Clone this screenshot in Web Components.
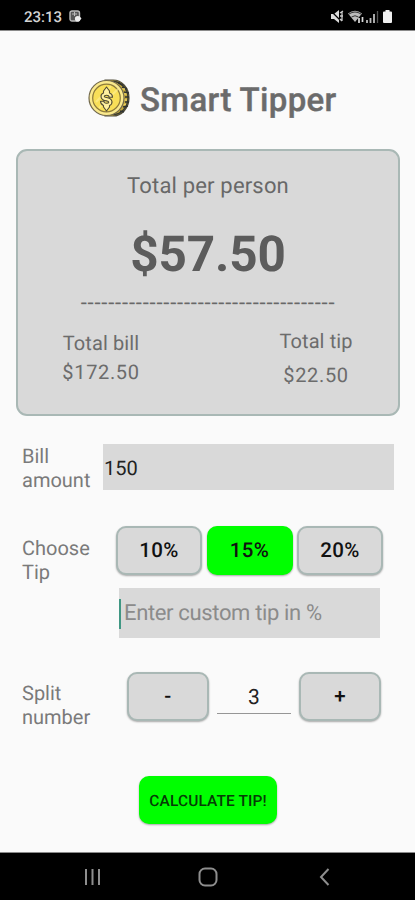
<!DOCTYPE html>
<html lang="en">
<head>
<meta charset="utf-8">
<title>Smart Tipper</title>
<style>
html,body{margin:0;height:100%}
body{font-family:Roboto,"Liberation Sans",sans-serif;background:#fafafa;overflow:hidden;text-rendering:geometricPrecision}
</style>
</head>
<body>
<tipper-app></tipper-app>
<script>
const define = (name, html) => customElements.define(name, class extends HTMLElement {
  constructor() {
    super();
    const t = document.createElement('template');
    t.innerHTML = html;
    this.attachShadow({mode: 'open'}).append(t.content.cloneNode(true));
  }
});

define('status-bar', `
<style>
:host{display:flex;box-sizing:border-box;height:31px;background:#000;border-bottom:1px solid #8a8a8a;align-items:center;padding:3px 22px 0 24px;color:#d4d4d4;font-size:15px;font-weight:500}
span{letter-spacing:0;width:39px;white-space:nowrap}
.note{margin-left:6px}.right{margin-left:auto}
svg{display:block}
</style>
<span>23:13</span>
<svg class="note" width="13" height="13" viewBox="0 0 13 13"><rect x="1" y="1" width="9.5" height="10" rx="2" fill="#555" stroke="#bbb" stroke-width="1.4"/><path d="M3 4h5M5.5 2v4" stroke="#bbb" stroke-width="1"/><circle cx="8.7" cy="8.7" r="2.8" fill="#eee"/><path d="M10 6l2.5 2.5L10 11z" fill="#eee"/></svg>
<svg class="right" width="63" height="16" viewBox="0 0 63 16">
<path d="M1 5h3l5-4v13l-5-4H1z" fill="#ddd"/><path d="M1 2l12 12" stroke="#000" stroke-width="1.2"/><path d="M10 4l3-2M10 7h3M10 10l2 2M12 3v9" stroke="#ccc" stroke-width="1.3"/>
<path d="M18 4.500q7-5.500 14 0l-7 8.500z" fill="#bbb"/><path d="M19 5q6-4 12 0M21.500 8q3.500-2.500 7 0" stroke="#333" stroke-width="1" fill="none"/><path d="M29 9v5M32.500 8v5" stroke="#ddd" stroke-width="1.700"/>
<path d="M37 11v3M40.500 9v5M44 5v9" stroke="#bbb" stroke-width="1.800"/><path d="M47.500 2v12" stroke="#555" stroke-width="1.300"/>
<path d="M53 3.500q0-1 1-1h1.500v-1.500h4v1.500h1.500q1 0 1 1V13q0 1-1 1h-7q-1 0-1-1z" fill="#f0f0f0"/></svg>`);

define('coin-icon', `
<style>:host{display:block;width:42px;height:38px}svg{display:block}</style>
<svg width="42" height="38" viewBox="0 0 42 38">
<path d="M17 1h8a16 18 0 0 1 0 36h-8z" fill="#c7aa38" stroke="#514d3b" stroke-width="1.200"/>
<path d="M25 2.500a15 16.500 0 0 1 0 33" fill="none" stroke="#3b3d33" stroke-width="1.500"/>
<path d="M30 3.500l5 3M34 8l5 2M36 13l5 1M37 18h4M37 23h4M35 28l5-1M32 32l4 1" stroke="#303332" stroke-width="1.600"/>
<path d="M34 10h3M35.500 15h3M36 21h3M35 25.500h3" stroke="#e8cf60" stroke-width="1.300"/>
<circle cx="18.500" cy="19" r="17.500" fill="#fae98c" stroke="#72694d" stroke-width="1.200"/>
<circle cx="18.500" cy="19" r="13.800" fill="#f8df58" stroke="#8c7a3b" stroke-width="1.200"/>
<path d="M8 23L23 7M11 29L30 10" stroke="#fff097" stroke-width="2" opacity=".6"/>
<path d="M18.500 8l3 4v2q3 1 3 4.200h-3.300q-.2-2-2.700-2c-3 0-3 1.800 0 2.300 7 1.200 6.500 6.500 3 8v1.500l-3 4-3-4v-1.500q-3-1.200-3-4.200h3.300q.2 2 2.700 2c3 0 3-1.900 0-2.400-7-1.200-6.500-6.500-3-7.900v-2z" fill="#fff0a0" stroke="#514b35" stroke-width="1.100" stroke-linejoin="round"/>
</svg>`);

define('app-title', `
<style>
:host{display:flex;align-items:center;height:42px;padding-left:88px;gap:10px}
h1{margin:0;font-size:33px;line-height:42px;font-weight:500;color:#6b6b6b;-webkit-text-stroke:.4px #6b6b6b;white-space:nowrap;padding-top:6px;letter-spacing:.35px}
</style><coin-icon></coin-icon><h1><slot></slot></h1>`);

define('amount-pair', `
<style>
:host{display:flex;flex-direction:column;align-items:center;width:78px;white-space:nowrap;font-size:20px;line-height:24px;color:#6c6c6c;letter-spacing:.1px;gap:var(--gap)}
.n{letter-spacing:.65px}
</style><slot name="label"></slot><span class="n"><slot></slot></span>`);

define('summary-card', `
<style>
:host{display:flex;flex-direction:column;align-items:center;box-sizing:border-box;width:384px;height:267px;border:2px solid #a9b8b5;border-radius:11px;background:#d9d9d9;color:#686868;white-space:nowrap}
.t{font-size:22px;line-height:26px;margin-top:23px;letter-spacing:.18px}
.v{font-size:49.500px;line-height:60px;font-weight:700;color:#5c5c5c;margin-top:25px;letter-spacing:-.15px}
.d{font-size:22px;line-height:20px;margin-top:9px;letter-spacing:.800px}
.r{display:flex;align-self:stretch;justify-content:space-between;padding:0 43px 0 44px;margin-top:15px;align-items:flex-start}
.a{margin-top:2px;--gap:5px}.b{--gap:10px}
</style>
<div class="t">Total per person</div><div class="v">$57.50</div><div class="d">-------------------------------------</div>
<div class="r"><amount-pair class="a"><span slot="label">Total bill</span><span>$172.50</span></amount-pair><amount-pair class="b"><span slot="label">Total tip</span><span>$22.50</span></amount-pair></div>`);

define('field-label', `
<style>:host{display:block;width:var(--w,81px);flex:none;font-size:20px;line-height:24px;letter-spacing:0;color:#7a7a7a}</style><slot></slot>`);

define('text-field', `
<style>
:host{display:flex;align-items:center;box-sizing:border-box;background:#d9d9d9;color:#222;font-size:20px;letter-spacing:0;white-space:nowrap}
:host([hint]){color:#8b8b8b;font-size:22px;letter-spacing:-.35px}
i{display:none;width:2.500px;height:30px;background:#409783;margin-right:3px}
:host([hint]) i{display:block}
</style><i></i><slot></slot>`);

define('tip-button', `
<style>
:host{display:flex;align-items:center;justify-content:center;box-sizing:border-box;width:86px;height:49px;padding-top:1px;border:2px solid #a9b8b5;border-radius:10px;background:#d9d9d9;box-shadow:0 1px 2px #0005;color:#111;font-size:20.500px;font-weight:500;letter-spacing:.3px;white-space:nowrap}
:host([active]){background:#0f0;border-color:#0f0}
:host([split]){width:82px}
:host([wide]){width:138px;font-size:15.500px;height:48px;letter-spacing:.1px;font-weight:500;color:#063c06}
</style><slot></slot>`);

define('number-field', `
<style>:host{display:flex;box-sizing:border-box;width:74px;height:42px;padding-top:10px;justify-content:center;align-items:center;border-bottom:1px solid #969696;color:#222;font-size:21px}</style><slot></slot>`);

define('nav-bar', `
<style>:host{display:flex;box-sizing:border-box;height:48px;border-top:1px solid #8a8a8a;background:#000;align-items:center;padding-left:84px}
svg{display:block;fill:none;stroke:#8e8e8e;stroke-width:2}
.home{margin:0 100px 0 96px}</style>
<svg width="18" height="20" viewBox="0 0 18 20"><path d="M2 2v16M8.500 2v16M15 2v16"/></svg>
<svg class="home" width="20" height="20" viewBox="0 0 20 20"><rect x="1.500" y="1.500" width="17" height="17" rx="5.500"/></svg>
<svg width="12" height="20" viewBox="0 0 12 20"><path d="M10.500 2L3 10l7.500 8"/></svg>`);

define('tipper-app', `
<style>
:host{display:flex;flex-direction:column;height:900px;width:415px;background:#fafafa}
main{flex:1;display:flex;flex-direction:column;min-height:0}
app-title{margin-top:46px}
summary-card{margin:30px 0 0 16px}
.row{display:flex;padding-left:22px}
.bill{margin-top:28px;height:46px}
.bill text-field{width:291px;height:46px;padding-left:1px;padding-top:1px}
.tip{margin-top:36px;height:112px}
.tip field-label{--w:94px;padding-top:10px}
.btns{display:flex;gap:4.500px}
.tip text-field{width:261px;height:50px;padding-top:1px;margin:13px 0 0 2.500px}
.split{margin-top:34px;height:49px}
.split field-label{--w:105px;padding-top:9px}
.split number-field{margin:0 8px}
.go{margin:55px 0 0 139px}
</style>
<status-bar></status-bar>
<main>
<app-title>Smart Tipper</app-title>
<summary-card></summary-card>
<div class="row bill"><field-label>Bill<br>amount</field-label><text-field>150</text-field></div>
<div class="row tip"><field-label>Choose<br>Tip</field-label><div><div class="btns"><tip-button>10%</tip-button><tip-button active>15%</tip-button><tip-button>20%</tip-button></div><text-field hint>Enter custom tip in %</text-field></div></div>
<div class="row split"><field-label>Split<br>number</field-label><tip-button split>-</tip-button><number-field>3</number-field><tip-button split>+</tip-button></div>
<tip-button class="go" active wide>CALCULATE TIP!</tip-button>
</main>
<nav-bar></nav-bar>`);
</script>
</body>
</html>
